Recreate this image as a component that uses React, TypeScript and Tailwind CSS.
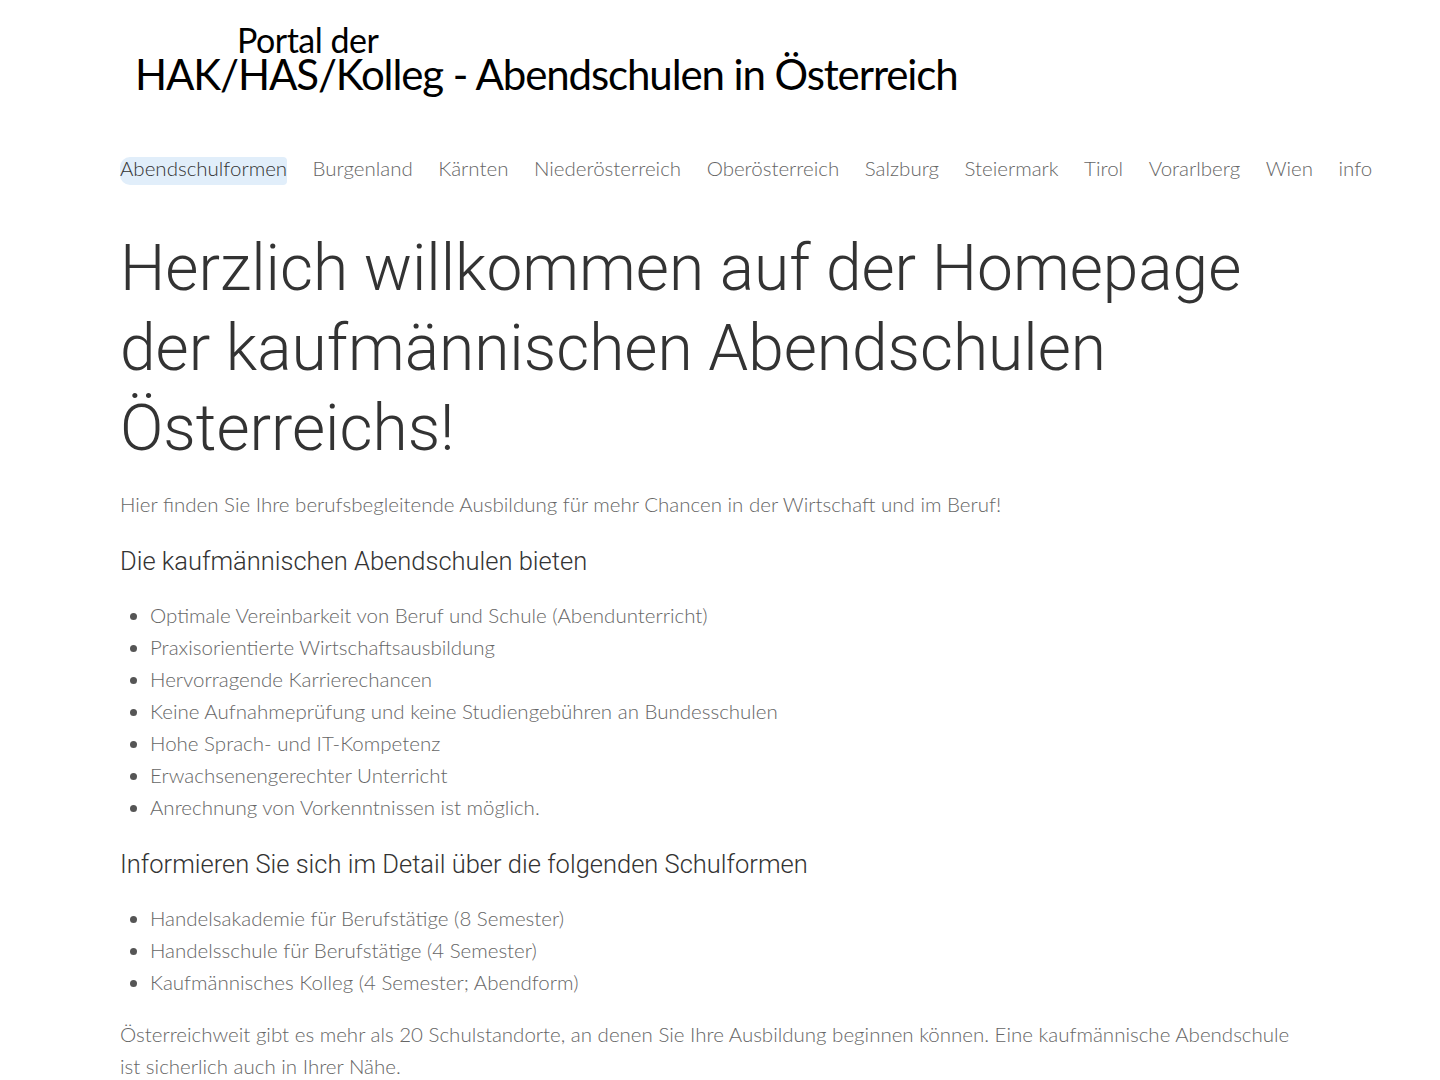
const navItems = [
  "Abendschulformen",
  "Burgenland",
  "Kärnten",
  "Niederösterreich",
  "Oberösterreich",
  "Salzburg",
  "Steiermark",
  "Tirol",
  "Vorarlberg",
  "Wien",
  "info",
];

const benefits = [
  "Optimale Vereinbarkeit von Beruf und Schule (Abendunterricht)",
  "Praxisorientierte Wirtschaftsausbildung",
  "Hervorragende Karrierechancen",
  "Keine Aufnahmeprüfung und keine Studiengebühren an Bundesschulen",
  "Hohe Sprach- und IT-Kompetenz",
  "Erwachsenengerechter Unterricht",
  "Anrechnung von Vorkenntnissen ist möglich.",
];

const schools = [
  "Handelsakademie für Berufstätige (8 Semester)",
  "Handelsschule für Berufstätige (4 Semester)",
  "Kaufmännisches Kolleg (4 Semester; Abendform)",
];

const body = "font-['Lato',sans-serif] font-light";
const head = "font-['Roboto',sans-serif] font-light";

function Bullets({ items }: { items: string[] }) {
  return (
    <ul className="list-disc pl-[30px] marker:text-[#555]">
      {items.map((t) => (
        <li key={t} className="text-[20.5px] leading-[32px] text-[#666]">
          {t}
        </li>
      ))}
    </ul>
  );
}

export default function App() {
  return (
    <div className={`min-h-screen bg-white ${body}`}>
      <div className="mx-auto w-[1200px]">
        {/* logo */}
        <div className="pt-[25px] pl-[15px] font-['Lato',sans-serif] font-normal text-black">
          <div className="pl-[102px] text-[34px] leading-[30px] tracking-[-0.5px]">Portal der</div>
          <div className="text-[42px] leading-[38px] tracking-[-1.1px]">
            HAK/HAS/Kolleg - Abendschulen in Österreich
          </div>
        </div>

        {/* nav */}
        <nav className="mt-[60px] flex gap-[25.5px] text-[20.5px] leading-[30px] text-[#666]">
          {navItems.map((item, i) => (
            <a key={item} className="relative whitespace-nowrap">
              {i === 0 && (
                <span className="absolute left-0 right-0 top-[4px] bottom-[-2px] rounded-l-[10px] rounded-r-[4px] bg-[#e1eefa]" />
              )}
              <span className={`relative ${i === 0 ? "text-[#333]" : ""}`}>{item}</span>
            </a>
          ))}
        </nav>

        <main className="mt-[46px] pb-10">
          <h1 className={`${head} text-[64px] leading-[80px] text-[#333]`}>
            Herzlich willkommen auf der Homepage der kaufmännischen Abendschulen Österreichs!
          </h1>

          <p className="mt-[19px] text-[20.5px] leading-[32px] text-[#666]">
            Hier finden Sie Ihre berufsbegleitende Ausbildung für mehr Chancen in der Wirtschaft und im Beruf!
          </p>

          <h2 className={`${head} mt-[23px] text-[25.5px] leading-[36px] text-[#333]`}>
            Die kaufmännischen Abendschulen bieten
          </h2>
          <div className="mt-[20px]">
            <Bullets items={benefits} />
          </div>

          <h2 className={`${head} mt-[23px] text-[25.5px] leading-[36px] text-[#333]`}>
            Informieren Sie sich im Detail über die folgenden Schulformen
          </h2>
          <div className="mt-[20px]">
            <Bullets items={schools} />
          </div>

          <p className="mt-[20px] max-w-[1190px] text-[20.5px] leading-[32px] text-[#666]">
            Österreichweit gibt es mehr als 20 Schulstandorte, an denen Sie Ihre Ausbildung beginnen können. Eine
            kaufmännische Abendschule ist sicherlich auch in Ihrer Nähe.
          </p>
        </main>
      </div>
    </div>
  );
}
